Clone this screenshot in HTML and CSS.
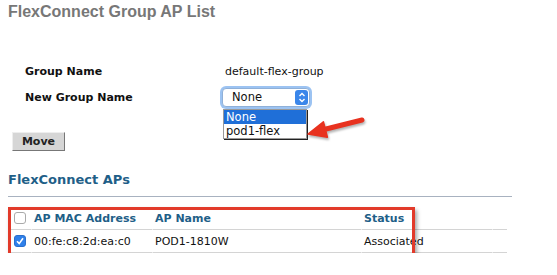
FILE: index.html
```html
<!DOCTYPE html>
<html>
<head>
  <title>FlexConnect Group AP List</title>
  <link rel="stylesheet" href="styles.css">
</head>
<body>
  <h1 class="page-title">FlexConnect Group AP List</h1>

  <div class="form-grid">
    <div class="form-label">Group Name</div>
    <div class="form-value">default-flex-group</div>
    <div class="form-label">New Group Name</div>
    <div class="form-value">
      <div class="select-box">
        <span class="select-text">None</span>
        <span class="select-stepper">
          <svg width="8" height="11" viewBox="0 0 8 11">
            <path d="M1.5 4 L4 1.5 L6.5 4 M1.5 7 L4 9.5 L6.5 7" fill="none" stroke="#fff" stroke-width="1.4"/>
          </svg>
        </span>
        <div class="select-menu">
          <div class="menu-item menu-item-active">None</div>
          <div class="menu-item">pod1-flex</div>
        </div>
      </div>
    </div>
  </div>

  <div class="button-row">
    <button class="move-btn">Move</button>
  </div>

  <h2 class="section-title">FlexConnect APs</h2>
  <div class="section-rule"></div>

  <div class="table-wrap">
    <table class="ap-table">
      <tr class="head-row">
        <th class="col-check"><span class="checkbox"></span></th>
        <th class="col-mac">AP MAC Address</th>
        <th class="col-name">AP Name</th>
        <th class="col-status">Status</th>
        <th class="col-extra"></th>
      </tr>
      <tr>
        <td class="col-check">
          <span class="checkbox checkbox-on">
            <svg width="10" height="10" viewBox="0 0 10 10">
              <path d="M2 5.2 L4.2 7.6 L8 2.2" fill="none" stroke="#fff" stroke-width="1.6"/>
            </svg>
          </span>
        </td>
        <td>00:fe:c8:2d:ea:c0</td>
        <td>POD1-1810W</td>
        <td>Associated</td>
        <td></td>
      </tr>
    </table>
    <div class="highlight-box"></div>
  </div>

  <!-- annotation arrow -->
  <svg class="arrow" width="64" height="32" viewBox="0 0 64 32">
    <path d="M20 17.5 L58 8" stroke="#e8321f" stroke-width="5" stroke-linecap="round"/>
    <path d="M4 22 L19.4 9.8 L23.4 25.2 Z" fill="#e8321f" stroke="#e8321f" stroke-width="1.5" stroke-linejoin="round"/>
  </svg>
</body>
</html>
```

FILE: styles.css
```css
body {
  margin: 0;
  font-family: "DejaVu Sans", Verdana, sans-serif;
  font-size: 11px;
  color: #111;
  background: #fff;
  position: relative;
}

.page-title {
  margin: 0;
  padding: 3px 8px 0;
  font-family: "Liberation Sans", Arial, sans-serif;
  font-size: 16px;
  font-weight: bold;
  color: #777;
  line-height: 18px;
}

.form-grid {
  display: grid;
  grid-template-columns: 197px 200px;
  grid-auto-rows: 26px;
  align-items: center;
  margin-top: 37px;
  padding-left: 25px;
}

.form-label {
  font-weight: bold;
}

.form-value {
  padding-left: 3px;
}

.form-value .select-box {
  margin-left: -3px;
}

.select-box {
  position: relative;
  width: 86px;
  height: 17px;
  border: 1px solid #8fb0d8;
  border-radius: 4px;
  box-shadow: 0 0 0 2px #9cc3f2;
  background: #fff;
  display: flex;
  align-items: center;
  justify-content: space-between;
}

.select-text {
  padding-left: 9px;
  font-size: 11.5px;
}

.select-stepper {
  width: 13px;
  height: 15px;
  margin-right: 1px;
  border-radius: 3px;
  background: #3a86ea;
  display: flex;
  align-items: center;
  justify-content: center;
}

.select-menu {
  position: absolute;
  left: 0;
  top: 20px;
  width: 82px;
  background: #fff;
  border: 1px solid #999;
  box-shadow: 1px 1px 0 #222;
}

.menu-item {
  height: 14px;
  line-height: 14px;
  padding-left: 2px;
  font-size: 11.5px;
}

.menu-item-active {
  background: #1f6fd8;
  color: #fff;
}

.button-row {
  margin-top: 22px;
  padding-left: 12px;
}

.move-btn {
  display: block;
  width: 53px;
  height: 19px;
  padding: 0;
  font-family: "DejaVu Sans", Verdana, sans-serif;
  font-size: 11px;
  font-weight: bold;
  color: #222;
  background: #d6d6d6;
  border: 1px solid;
  border-color: #eee #777 #777 #eee;
}

.section-title {
  margin: 21px 0 0;
  padding-left: 8px;
  font-size: 13px;
  font-weight: bold;
  color: #1f5f88;
  line-height: 16px;
}

.section-rule {
  margin: 8px 45px 0 8px;
  height: 1px;
  background: #a8b2c0;
}

.table-wrap {
  position: relative;
  margin-top: 10px;
  margin-left: 8px;
  width: 499px;
}

.ap-table {
  width: 499px;
  border-collapse: separate;
  border-spacing: 0;
}

.ap-table th,
.ap-table td {
  padding: 0 2px;
  height: 22px;
  text-align: left;
  border-bottom: 1px solid #d4d4d4;
  border-left: 1px solid #fff;
}

.ap-table th {
  height: 22px;
  color: #1f5f88;
  font-weight: bold;
  vertical-align: middle;
}

.col-check {
  width: 18px;
}

.col-mac {
  width: 116px;
}

.col-name {
  width: 204px;
}

.col-status {
  width: 126px;
}

.checkbox {
  display: flex;
  align-items: center;
  justify-content: center;
  width: 10px;
  height: 10px;
  margin-left: 3px;
  border: 1px solid #aaa;
  border-radius: 3px;
  background: #fff;
}

.checkbox-on {
  background: #2f80ea;
  border-color: #2a6fcc;
}

.highlight-box {
  position: absolute;
  left: 0;
  top: 0;
  width: 401px;
  height: 49px;
  border: 3px solid #e23a2a;
  box-shadow: 2px 3px 4px rgba(0, 0, 0, 0.35);
}

.arrow {
  position: absolute;
  left: 304px;
  top: 112px;
  filter: drop-shadow(1px 2px 1px rgba(0, 0, 0, 0.3));
}
```
